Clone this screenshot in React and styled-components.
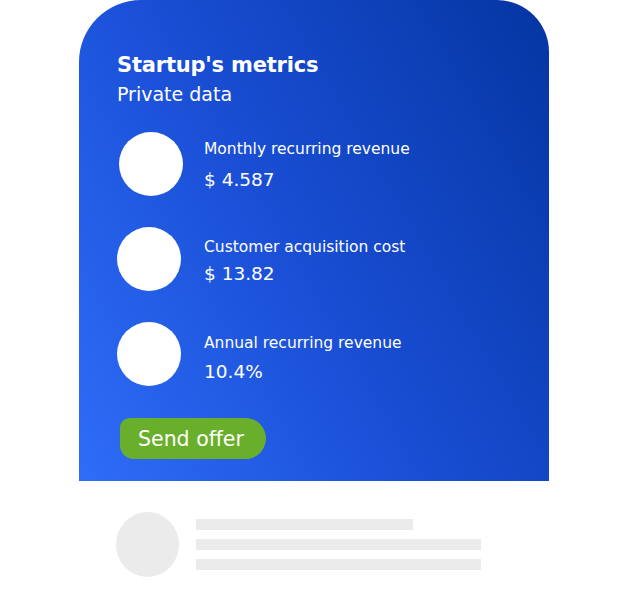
import React from "react";
import styled, { createGlobalStyle } from "styled-components";

const Global = createGlobalStyle`
  html, body { margin: 0; padding: 0; background: #ffffff; }
  body { font-family: "DejaVu Sans", "Open Sans", sans-serif; }
`;

const Page = styled.div`
  width: 628px;
  height: 600px;
  background: #fff;
  overflow: hidden;
`;

const Card = styled.section`
  margin-left: 79px;
  width: 470px;
  height: 481px;
  box-sizing: border-box;
  padding: 50px 0 0 38px;
  border-radius: 62px 52px 0 0;
  background: linear-gradient(60deg, #2f6df8 0%, #1a4fd6 45%, #0535a2 100%);
  color: #fff;
  display: flex;
  flex-direction: column;
`;

const Title = styled.h1`
  margin: 0;
  font-size: 21px;
  line-height: 30px;
  font-weight: 700;
  letter-spacing: -0.2px;
`;

const Subtitle = styled.div`
  font-size: 19px;
  line-height: 24px;
  margin-top: 2px;
`;

const Metrics = styled.div`
  display: flex;
  flex-direction: column;
  gap: 31px;
  margin-top: 26px;
`;

const Row = styled.div`
  display: flex;
  align-items: flex-start;
`;

const Dot = styled.div`
  width: 64px;
  height: 64px;
  border-radius: 50%;
  background: #fff;
  flex: none;
  margin-left: ${(p) => p.$shift}px;
  margin-right: ${(p) => 24 - p.$shift}px;
`;

const Info = styled.div`
  padding-top: ${(p) => p.$top}px;
  margin-left: -1px;
`;

const Label = styled.div`
  font-size: 15.5px;
  line-height: 18px;
`;

const Value = styled.div`
  font-size: 18.5px;
  line-height: 22px;
  margin-top: ${(p) => p.$gap}px;
`;

const Button = styled.button`
  margin-top: 32px;
  margin-left: 3px;
  align-self: flex-start;
  width: 146px;
  height: 41px;
  border: none;
  border-radius: 10px 21px 21px 14px;
  background: #6aaf2b;
  color: #fff;
  font-family: inherit;
  font-size: 20.5px;
  text-align: left;
  padding: 0 0 0 18px;
`;

const Skeleton = styled.div`
  display: flex;
  align-items: center;
  margin: 31px 0 0 116px;
  gap: 17px;
`;

const Avatar = styled.div`
  width: 63px;
  height: 65px;
  border-radius: 50%;
  background: #ebebeb;
`;

const Lines = styled.div`
  display: flex;
  flex-direction: column;
  gap: 9px;
`;

const Line = styled.div`
  height: 11px;
  width: ${(p) => p.$w}px;
  background: #ebebeb;
`;

const metrics = [
  { label: "Monthly recurring revenue", value: "$ 4.587", shift: 2, top: 8, gap: 11 },
  { label: "Customer acquisition cost", value: "$ 13.82", shift: 0, top: 11, gap: 7 },
  { label: "Annual recurring revenue", value: "10.4%", shift: 0, top: 12, gap: 9 },
];

export default function App() {
  return (
    <Page>
      <Global />
      <Card>
        <Title>Startup's metrics</Title>
        <Subtitle>Private data</Subtitle>
        <Metrics>
          {metrics.map((m) => (
            <Row key={m.label}>
              <Dot $shift={m.shift} />
              <Info $top={m.top}>
                <Label>{m.label}</Label>
                <Value $gap={m.gap}>{m.value}</Value>
              </Info>
            </Row>
          ))}
        </Metrics>
        <Button>Send offer</Button>
      </Card>
      <Skeleton>
        <Avatar />
        <Lines>
          <Line $w={217} />
          <Line $w={285} />
          <Line $w={285} />
        </Lines>
      </Skeleton>
    </Page>
  );
}
